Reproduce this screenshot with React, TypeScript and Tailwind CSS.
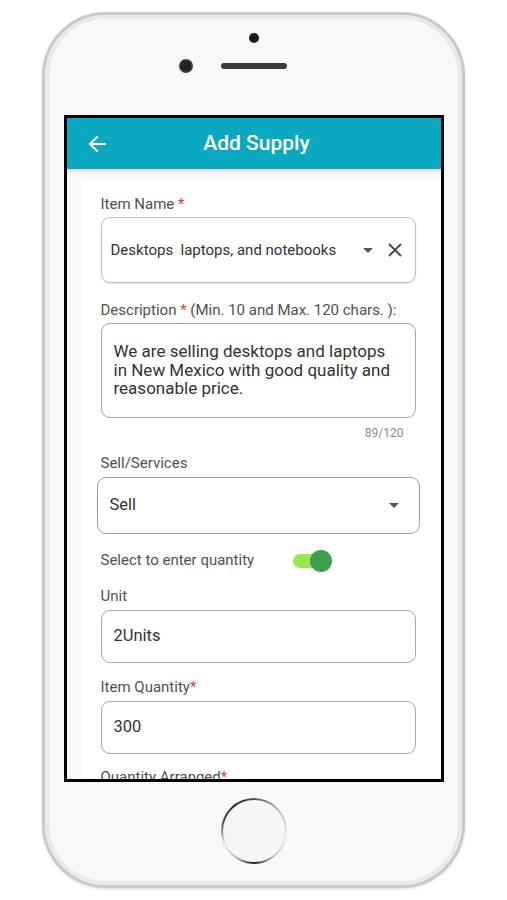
import React from "react";

function Label({ text, req, extra }: { text: string; req?: "space" | "tight"; extra?: string }) {
  return (
    <div className="text-[15px] leading-[17px] text-[#505050]">
      {text}
      {req === "space" && <span className="text-[#e53935]"> *</span>}
      {req === "tight" && <span className="text-[#e53935]">*</span>}
      {extra}
    </div>
  );
}

function Caret() {
  return (
    <svg width="12" height="7" viewBox="0 0 12 7">
      <path d="M1 1h10L6 6z" fill="#555" />
    </svg>
  );
}

export default function App() {
  return (
    <div className="w-[507px] h-[900px] bg-white pt-[12px] pl-[42px] font-['Roboto',sans-serif]">
      <div className="w-[423px] h-[876px] rounded-[64px] border-[3px] border-[#c9c9c9] bg-[#f8f8f8] shadow-[inset_0_0_0_4px_#e9e9e9,0_1px_3px_rgba(0,0,0,0.15)] flex flex-col items-center">
        {/* top: sensors and speaker */}
        <div className="h-[100px] flex flex-col items-center">
          <div className="mt-[18px] w-[10px] h-[10px] rounded-full bg-[#1c1c1c]" />
          <div className="mt-[16px] flex items-center">
            <div className="w-[14px] h-[14px] rounded-full bg-[#1e2230] border-2 border-[#3a3a3a]" />
            <div className="ml-[28px] w-[66px] h-[6px] rounded-full bg-[#3a3a3a]" />
            <div className="w-[42px]" />
          </div>
        </div>

        {/* screen */}
        <div className="w-[380px] h-[667px] border-[3px] border-black bg-[#f8f8f8] flex flex-col overflow-hidden">
          <div className="h-[51px] shrink-0 bg-[#0ba9c1] flex items-center shadow-[0_2px_3px_rgba(0,0,0,0.15)]">
            <svg className="ml-[20px]" width="20" height="18" viewBox="0 0 20 18" fill="none">
              <path d="M18 9H3M10 2L3 9l7 7" stroke="white" strokeWidth="2.2" strokeLinecap="round" strokeLinejoin="round" />
            </svg>
            <div className="flex-1 text-center pr-[34px] text-white text-[21px] font-medium">Add Supply</div>
          </div>

          <div className="ml-[14px] mt-[11px] flex-1 bg-white pl-[20px] pr-[25px] pt-[16px] flex flex-col">
            <Label text="Item Name" req="space" />
            <div className="mt-[4px] h-[66px] rounded-[9px] border border-[#bdbdbd] shadow-[0_1px_2px_rgba(0,0,0,0.12)] flex items-center pl-[9px] pr-[13px]">
              <span className="flex-1 text-[15px] text-[#333]">Desktops&nbsp; laptops, and notebooks</span>
              <Caret />
              <svg className="ml-[14px]" width="14" height="14" viewBox="0 0 14 14">
                <path d="M1 1l12 12M13 1L1 13" stroke="#444" strokeWidth="1.8" />
              </svg>
            </div>

            <div className="mt-[19px]">
              <Label text="Description" req="space" extra=" (Min. 10 and Max. 120 chars. ):" />
            </div>
            <div className="mt-[4px] h-[95px] rounded-[9px] border border-[#a8a8a8] pl-[12px] pr-[18px] pt-[18px] text-[17px] leading-[18.5px] text-[#333]">
              We are selling desktops and laptops in New Mexico with good quality and reasonable price.
            </div>
            <div className="mt-[8px] text-right pr-[12px] text-[12px] leading-[14px] text-[#8a8a8a]">89/120</div>

            <div className="mt-[15px]">
              <Label text="Sell/Services" />
            </div>
            <div className="mt-[5px] -mx-[4px] h-[57px] rounded-[9px] border border-[#9e9e9e] flex items-center pl-[12px] pr-[19px]">
              <span className="flex-1 text-[16.5px] text-[#333]">Sell</span>
              <Caret />
            </div>

            <div className="mt-[18px] flex items-center h-[17px]">
              <div className="w-[192px]">
                <Label text="Select to enter quantity" />
              </div>
              <div className="relative w-[38px] h-[14px] rounded-full bg-[#9be552]">
                <div className="absolute right-[-1px] top-[-4px] w-[22px] h-[22px] rounded-full bg-[#3d9e4b]" />
              </div>
            </div>

            <div className="mt-[19px]">
              <Label text="Unit" />
            </div>
            <div className="mt-[5px] h-[53px] rounded-[9px] border border-[#a8a8a8] flex items-center pl-[12px] text-[16.5px] text-[#333]">
              2Units
            </div>

            <div className="mt-[16px]">
              <Label text="Item Quantity" req="tight" />
            </div>
            <div className="mt-[5px] h-[53px] rounded-[9px] border border-[#a8a8a8] flex items-center pl-[12px] text-[16.5px] text-[#333]">
              300
            </div>

            <div className="mt-[15px]">
              <Label text="Quantity Arranged" req="tight" />
            </div>
          </div>
        </div>

        {/* home button */}
        <div className="mt-[16px] w-[66px] h-[66px] rounded-full p-[2px] bg-[conic-gradient(#555_0deg,#bbb_50deg,#eee_100deg,#ccc_140deg,#222_180deg,#bbb_215deg,#eee_245deg,#444_290deg,#222_325deg,#555_360deg)]">
          <div className="w-full h-full rounded-full bg-[#f6f6f6]" />
        </div>
      </div>
    </div>
  );
}
